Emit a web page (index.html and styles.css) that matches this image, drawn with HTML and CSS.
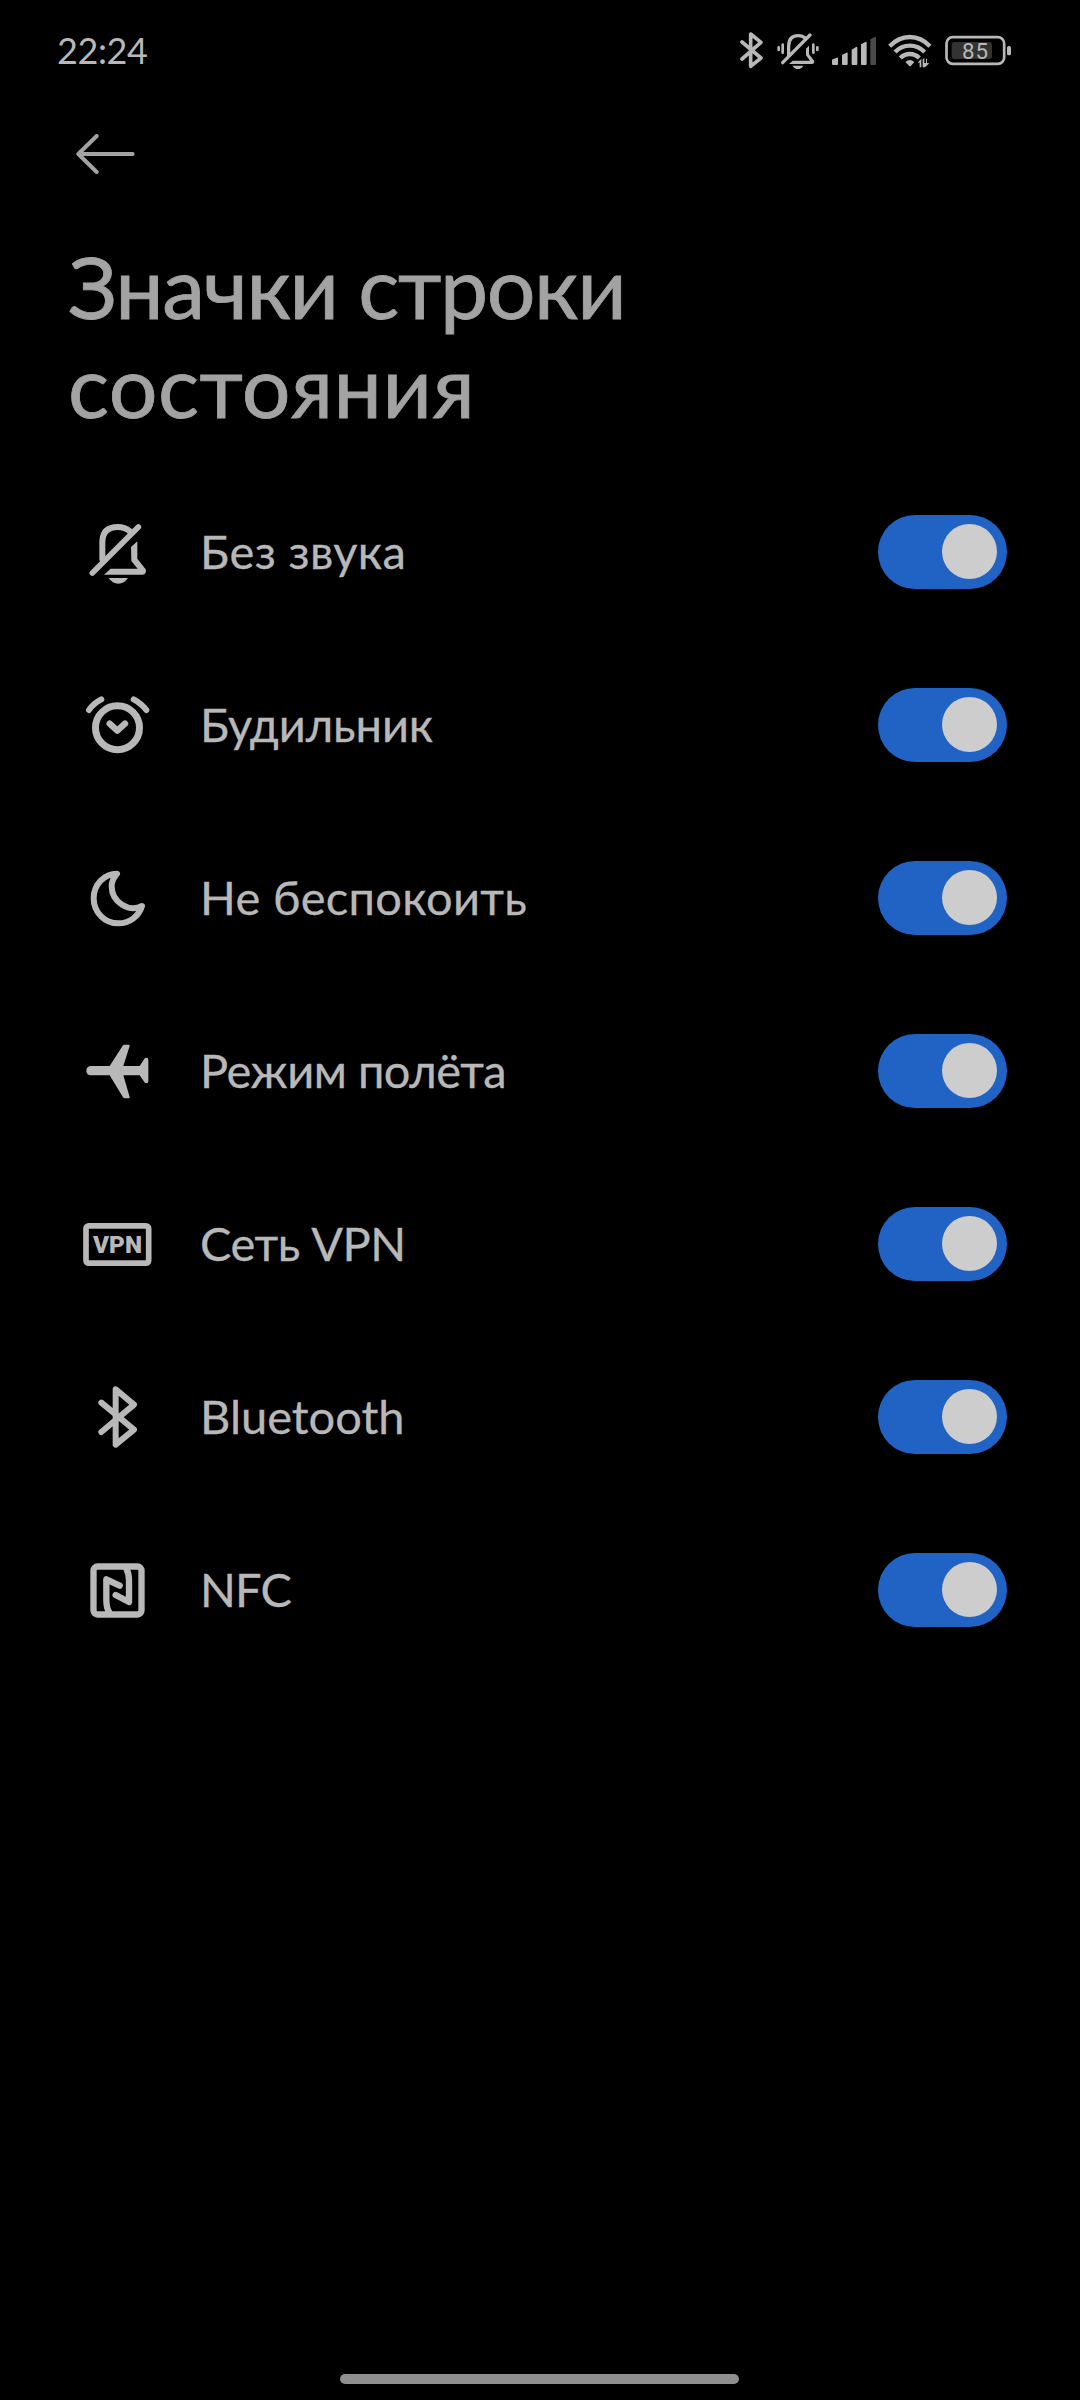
FILE: index.html
```html
<!DOCTYPE html>
<html lang="ru">
<head>
<meta charset="utf-8">
<title>Значки строки состояния</title>
<link rel="stylesheet" href="styles.css">
</head>
<body>
<div class="screen">
  <header class="status">
    <span class="clock">22:24</span>
    <div class="status-icons">
      <svg class="s-bt" viewBox="60 0 72 195"><path class="line w9" d="M66 66 123 114 92 139V42L123 67 66 117"/></svg>
      <svg class="s-bell" viewBox="168 0 132 195">
        <path class="line w8" d="M206 108V79Q206 47 235 47 246 47 254 53"/>
        <path class="line w8" d="M188 128 270 45"/>
        <path class="fill" d="M258 86 267 77V103L283 123Q283 132 276 132H207L218 122H270L258 106Z"/>
        <path class="fill" d="M217 137H250Q244 147 234 147 224 147 217 137Z"/>
        <path class="line w7" d="M176 82V90M188 74V98M280 74V98M292 82V90"/>
      </svg>
      <svg class="s-signal" viewBox="333 0 138 195">
        <path class="fill" d="M336 121Q336 119 338 118L351 113Q354 112 354 115V132Q354 135 351 135H339Q336 135 336 132ZM366 105 379 98Q383 96 383 100V132Q383 135 380 135H369Q366 135 366 132ZM395 89 408 81Q412 79 412 83V132Q412 135 409 135H398Q395 135 395 132ZM423 73 436 66Q440 64 440 68V132Q440 135 437 135H426Q423 135 423 132Z"/>
        <path class="dim" d="M451 58 464 51Q468 49 468 53V132Q468 135 465 135H454Q451 135 451 132Z"/>
      </svg>
      <svg class="s-wifi" viewBox="504 0 132 195">
        <path class="line w10 butt" d="M509 79Q535 51 569.500 51T630 79M525 96Q544 77 569.500 77T614 96M541 114Q553 102 569.500 102T598 114"/>
        <path class="fill" d="M556 126Q569 114 583 126L573 137Q570 140 567 137Z"/>
        <path class="fill" d="M593 128 604 116V142H599V128ZM608 142V118L613 114V129H618V116H621V129L628 130 615 142Z"/>
      </svg>
      <svg class="s-battery" viewBox="675 0 201 195">
        <rect class="line w7" x="679.500" y="51.500" width="173" height="80" rx="19"/>
        <rect class="charge" x="695" y="66" width="121" height="51" rx="8"/>
        <rect class="fill" x="861" y="78" width="12" height="28" rx="5"/>
        <text class="percent" x="765" y="117" text-anchor="middle" textLength="78">85</text>
      </svg>
    </div>
  </header>

  <nav class="toolbar">
    <svg class="back" viewBox="108 342 177 120"><path class="line w11" d="M278 402H115M170 348 115 402 170 456"/></svg>
  </nav>

  <h1 class="title"><span class="t1">Значки строки</span><br><span class="t2">состояния</span></h1>

  <main class="list">
    <div class="row">
      <svg class="icon" viewBox="33 45 219 219">
        <path class="line w18" d="M97 178V127Q97 81 144 81 164 81 180 94"/>
        <path class="line w17" d="M67 219 205 81"/>
        <path class="fill" d="M183 141 202 124V176L227 208Q231 215 226 220 224 224 218 224H102L122 206H203L184 183Z"/>
        <path class="fill" d="M116 234H174Q163 251 145 251T116 234Z"/>
      </svg>
      <span class="label l1">Без звука</span><span class="switch"></span>
    </div>
    <div class="row">
      <svg class="icon" viewBox="33 54 219 219">
        <circle class="line w21" cx="142.500" cy="173" r="66"/>
        <path class="line w19" d="M119 161 142 182 165 161"/>
        <path class="line w18" d="M57 120Q69 101 94 88M191 88Q215 101 229 120"/>
      </svg>
      <span class="label l2">Будильник</span><span class="switch"></span>
    </div>
    <div class="row">
      <svg class="icon" viewBox="33 48 219 219">
        <path class="line w18" d="M141 86C104 86 71 117 71 160C71 202 104 235 145 235C180 235 207 212 216 183C178 203 125 173 125 124C125 108 132 96 141 86Z"/>
      </svg>
      <span class="label l3">Не беспокоить</span><span class="switch"></span>
    </div>
    <div class="row">
      <svg class="icon" viewBox="33 42 219 219">
        <path class="fill" d="M62 138H119L158 77Q160 74 163 74H176Q180 74 179 78L160 138H209L223 117Q225 113 229 113 235 113 235 120V183Q235 190 229 190 225 190 223 186L209 166H160L179 231Q180 235 176 235H164Q161 235 159 232L119 166H62Q49 164 49 152T62 138Z"/>
      </svg>
      <span class="label l4">Режим полёта</span><span class="switch"></span>
    </div>
    <div class="row">
      <svg class="icon" viewBox="33 36 219 219">
        <rect class="line w17" x="48" y="92.500" width="188" height="112" rx="8"/>
        <text class="vpn" x="69" y="174" textLength="147" lengthAdjust="spacingAndGlyphs">VPN</text>
      </svg>
      <span class="label l5">Сеть VPN</span><span class="switch"></span>
    </div>
    <div class="row">
      <svg class="icon" viewBox="33 45 219 219">
        <path class="line w18" d="M94 113 192 194 137 239V73L192 119 94 201"/>
      </svg>
      <span class="label l6">Bluetooth</span><span class="switch"></span>
    </div>
    <div class="row">
      <svg class="icon" viewBox="33 39 219 219">
        <rect class="line w19" x="70.500" y="79.500" width="144" height="144" rx="12"/>
        <path class="line w19" d="M149 137 109 118V181Q109 206 120 221M137 165 177 186V122Q177 100 168 83"/>
      </svg>
      <span class="label l7">NFC</span><span class="switch"></span>
    </div>
  </main>

  <div class="home"></div>
</div>
</body>
</html>
```
FILE: styles.css
```css
* { box-sizing: border-box; }
body { margin: 0; background: #000; }
.screen {
  width: 1080px;
  height: 2400px;
  display: flex;
  flex-direction: column;
  background: #000;
  color: #b8b8b8;
  font-family: Lato, "Noto Sans", sans-serif;
  overflow: hidden;
}
svg { display: block; flex: none; }
.line { fill: none; stroke: #b8b8b8; stroke-linecap: round; stroke-linejoin: round; }
.butt { stroke-linecap: butt; }
.fill { fill: #b8b8b8; }
.dim { fill: #4a4a4a; }
.charge { fill: #333; }
.w7 { stroke-width: 8; }
.w8 { stroke-width: 10; }
.w9 { stroke-width: 11; }
.w10 { stroke-width: 13; }
.w11 { stroke-width: 12; }
.w17 { stroke-width: 17; }
.w18 { stroke-width: 18; }
.w19 { stroke-width: 19; }
.w21 { stroke-width: 21; }

.status {
  height: 105px;
  padding: 20px 68px 0 57px;
  display: flex;
  justify-content: space-between;
  align-items: flex-start;
}
.clock { font-size: 36px; line-height: 60px; letter-spacing: -0.4px; white-space: nowrap; }
.status-icons { display: flex; }
.status-icons svg { height: 65px; }
.s-bt { width: 24px; margin-right: 12px; }
.s-bell { width: 44px; margin-right: 11px; }
.s-signal { width: 46px; margin-right: 11px; }
.s-wifi { width: 44px; margin-right: 13px; }
.s-battery { width: 67px; }
.percent { fill: #b8b8b8; font-family: Roboto, sans-serif; font-size: 67px; }

.toolbar { height: 131px; padding: 29px 0 0 76px; }
.back { width: 59px; height: 40px; }
.back .line { stroke: #a3a3a3; }

.title {
  height: 229px;
  margin: 0;
  padding: 0 0 0 68px;
  font-size: 86px;
  line-height: 99px;
  font-weight: 400;
  color: #a3a3a3;
  -webkit-text-stroke: 0.8px #a3a3a3;
  white-space: nowrap;
}
.t1 { letter-spacing: -1.4px; }
.t2 { letter-spacing: 0.5px; }

.row {
  height: 173px;
  padding: 0 73px 0 81px;
  display: flex;
  align-items: center;
}
.icon { width: 73px; height: 73px; margin-right: 46px; }
.label {
  flex: 1;
  padding-bottom: 2px;
  font-size: 47px;
  line-height: 60px;
  -webkit-text-stroke: 0.3px #b8b8b8;
  white-space: nowrap;
}
.l1 { letter-spacing: 0.4px; }
.l2 { letter-spacing: -0.1px; }
.l3 { letter-spacing: 0.3px; }
.l4 { letter-spacing: -0.5px; }
.l5 { letter-spacing: -0.5px; }
.l7 { letter-spacing: -0.8px; }
.vpn { fill: #b8b8b8; font-family: Roboto, sans-serif; font-size: 72px; font-weight: 900; }
.switch {
  width: 129px;
  height: 74px;
  padding: 9px 10px;
  border-radius: 37px;
  background: #2063c4;
  display: flex;
  justify-content: flex-end;
}
.switch::before { content: ""; width: 55px; height: 55px; border-radius: 50%; background: #cdcdcd; }

.home { width: 399px; height: 10px; margin: auto auto 16px 340px; border-radius: 5px; background: #8f8f8f; }
```
